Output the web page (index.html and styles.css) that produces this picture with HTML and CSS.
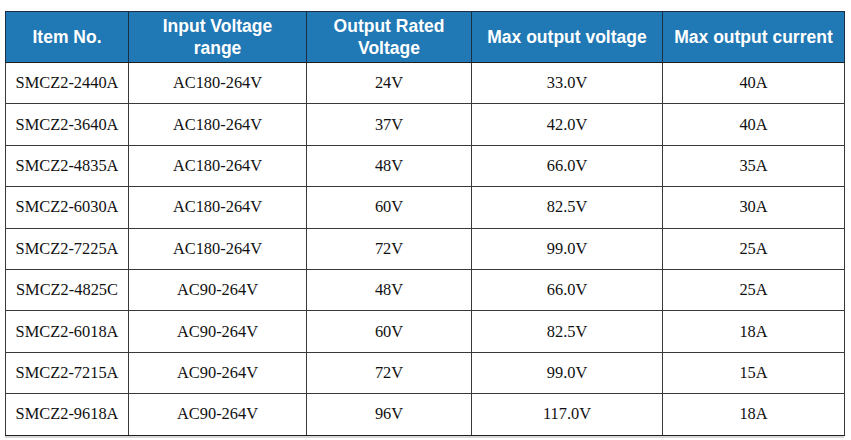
FILE: index.html
```html
<!DOCTYPE html>
<html>
<head>
<meta charset="utf-8">
<link rel="stylesheet" href="styles.css">
</head>
<body>
<div class="page">
<table class="spec">
  <colgroup>
    <col class="c1"><col class="c2"><col class="c3"><col class="c4"><col class="c5">
  </colgroup>
  <thead>
    <tr>
      <th>Item No.</th>
      <th>Input Voltage<br>range</th>
      <th>Output Rated<br>Voltage</th>
      <th>Max output voltage</th>
      <th>Max output current</th>
    </tr>
  </thead>
  <tbody>
    <tr><td>SMCZ2-2440A</td><td>AC180-264V</td><td>24V</td><td>33.0V</td><td>40A</td></tr>
    <tr><td>SMCZ2-3640A</td><td>AC180-264V</td><td>37V</td><td>42.0V</td><td>40A</td></tr>
    <tr><td>SMCZ2-4835A</td><td>AC180-264V</td><td>48V</td><td>66.0V</td><td>35A</td></tr>
    <tr><td>SMCZ2-6030A</td><td>AC180-264V</td><td>60V</td><td>82.5V</td><td>30A</td></tr>
    <tr><td>SMCZ2-7225A</td><td>AC180-264V</td><td>72V</td><td>99.0V</td><td>25A</td></tr>
    <tr><td>SMCZ2-4825C</td><td>AC90-264V</td><td>48V</td><td>66.0V</td><td>25A</td></tr>
    <tr><td>SMCZ2-6018A</td><td>AC90-264V</td><td>60V</td><td>82.5V</td><td>18A</td></tr>
    <tr><td>SMCZ2-7215A</td><td>AC90-264V</td><td>72V</td><td>99.0V</td><td>15A</td></tr>
    <tr><td>SMCZ2-9618A</td><td>AC90-264V</td><td>96V</td><td>117.0V</td><td>18A</td></tr>
  </tbody>
</table>
<div class="shade"></div>
</div>
</body>
</html>
```
FILE: styles.css
```css
html, body {
  margin: 0;
  padding: 0;
  background: #ffffff;
}
.page {
  padding: 11px 0 0 5px;
}
.spec {
  border-collapse: collapse;
  table-layout: fixed;
  width: 839px;
  border: 1px solid #1e1e1e;
}
.c1 { width: 123px; }
.c2 { width: 178px; }
.c3 { width: 165px; }
.c4 { width: 191px; }
.c5 { width: 182px; }
.spec th {
  background: #2078b4;
  color: #ffffff;
  font-family: "Liberation Sans", Arial, sans-serif;
  font-weight: bold;
  font-size: 17.5px;
  line-height: 22px;
  height: 50px;
  padding: 0;
  text-align: center;
  vertical-align: middle;
  border: 1px solid #1b2f44;
  border-bottom: 1px solid #1e1e1e;
}
.spec td {
  font-family: "Liberation Serif", "Times New Roman", serif;
  font-size: 16.4px;
  color: #111111;
  text-align: center;
  vertical-align: middle;
  height: 40.4px;
  padding: 0;
  border: 1px solid #3a3a3a;
}
.spec tbody tr:last-child td {
  border-bottom: 1px solid #1e1e1e;
}
.shade {
  width: 839px;
  height: 2px;
  background: #d8d8d8;
}
```
